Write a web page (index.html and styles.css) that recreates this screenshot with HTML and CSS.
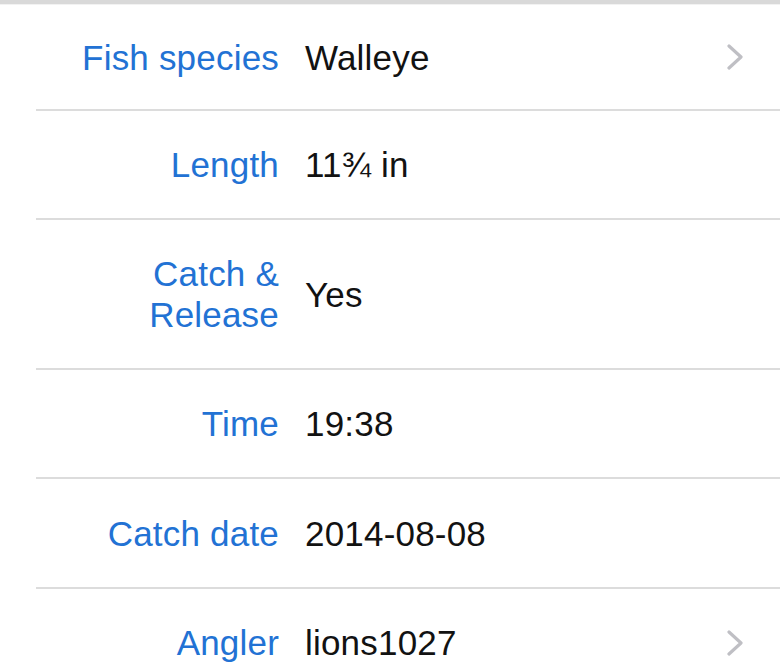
FILE: index.html
```html
<!DOCTYPE html>
<html>
<head>
<meta charset="utf-8">
<link rel="stylesheet" href="styles.css">
</head>
<body>
<div class="topbar"></div>
<div class="list">
  <div class="row">
    <div class="cell h107">
      <div class="label">Fish species</div>
      <div class="value">Walleye</div>
      <svg class="chev" width="18" height="26" viewBox="0 0 18 26"><path d="M3 2 L15 13 L3 24" fill="none" stroke="#bfbfc4" stroke-width="3.2" stroke-linecap="round" stroke-linejoin="round"/></svg>
    </div>
  </div>
  <div class="row">
    <div class="cell h109">
      <div class="label">Length</div>
      <div class="value">11¾ in</div>
    </div>
  </div>
  <div class="row">
    <div class="cell h150">
      <div class="label">Catch &amp; Release</div>
      <div class="value">Yes</div>
    </div>
  </div>
  <div class="row">
    <div class="cell h109">
      <div class="label">Time</div>
      <div class="value">19:38</div>
    </div>
  </div>
  <div class="row">
    <div class="cell h110">
      <div class="label">Catch date</div>
      <div class="value">2014-08-08</div>
    </div>
  </div>
  <div class="row">
    <div class="cell h109">
      <div class="label">Angler</div>
      <div class="value">lions1027</div>
      <svg class="chev" width="18" height="26" viewBox="0 0 18 26"><path d="M3 2 L15 13 L3 24" fill="none" stroke="#bfbfc4" stroke-width="3.2" stroke-linecap="round" stroke-linejoin="round"/></svg>
    </div>
  </div>
</div>
</body>
</html>
```
FILE: styles.css
```css
html, body {
  margin: 0;
  padding: 0;
  background: #ffffff;
  font-family: "Liberation Sans", Arial, sans-serif;
  overflow: hidden;
}
.topbar {
  height: 4px;
  background: #d9d9d9;
  border-bottom: 1px solid #f2f2f2;
}
.list {
  display: flex;
  flex-direction: column;
}
.row {
  padding-left: 36px;
}
.cell {
  display: flex;
  align-items: center;
  border-bottom: 2px solid #dcdcdc;
  box-sizing: border-box;
  padding-right: 36px;
}
.h107 { height: 106px; }
.h109 { height: 109px; }
.h110 { height: 110px; }
.h150 { height: 150px; }
.label {
  width: 243px;
  flex: none;
  text-align: right;
  color: #2272d4;
  font-size: 35px;
  letter-spacing: 0.2px;
  line-height: 41px;
}
.value {
  flex: 1;
  margin-left: 26px;
  color: #121212;
  font-size: 35px;
  letter-spacing: 0.2px;
  line-height: 41px;
}
.chev {
  flex: none;
  display: block;
}
```
